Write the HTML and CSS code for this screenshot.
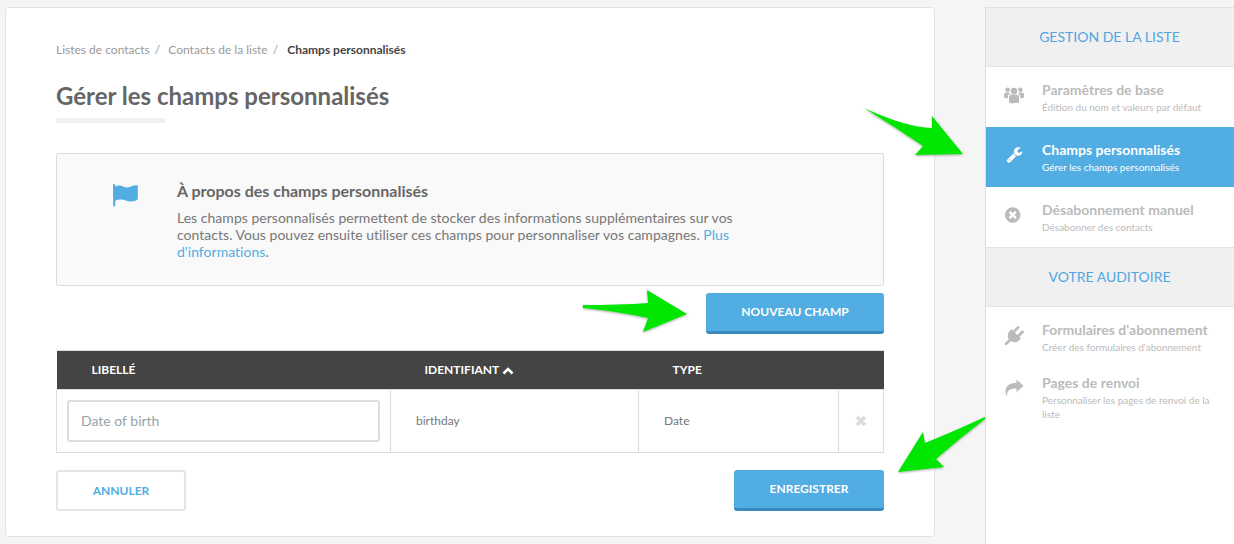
FILE: index.html
```html
<!DOCTYPE html>
<html lang="fr">
<head>
    <meta charset="UTF-8">
    <title>Champs personnalisés</title>
    <link rel="stylesheet" href="styles.css">
</head>
<body>

    <div class="page">
        <!-- Main card -->
        <div class="card">
            <div class="breadcrumb">
                <a href="#">Listes de contacts</a><span class="sep">/</span>
                <a href="#">Contacts de la liste</a><span class="sep">/</span>
                <strong>Champs personnalisés</strong>
            </div>

            <h1 class="page-title">Gérer les champs personnalisés</h1>

            <div class="info-box">
                <div class="info-icon">
                    <svg width="26" height="24" viewBox="0 0 26 24"><path fill="#52ade2" d="M1 2.500C1 .6 3.200 .6 3.200 2.500V3.400C6 2 8.600 2.200 11 3.400C13.500 4.600 16 5 18.500 3.800C20.500 2.800 23 1.600 25.800 2.400V16C25.800 17 22 18.600 18 18.600C15 18.600 12.500 16.500 9 16.500C6.800 16.500 4.800 17 3.200 17.800V22.600C3.200 24 1.200 24 1.200 22.600Z"/></svg>
                </div>
                <div class="info-text">
                    <h2>À propos des champs personnalisés</h2>
                    <p>Les champs personnalisés permettent de stocker des informations supplémentaires sur vos contacts. Vous pouvez ensuite utiliser ces champs pour personnaliser vos campagnes. <a href="#">Plus d'informations</a>.</p>
                </div>
            </div>

            <div class="new-row">
                <button class="btn btn-primary btn-new">NOUVEAU CHAMP</button>
            </div>

            <table class="fields-table">
                <thead>
                    <tr>
                        <th class="col-label">LIBELLÉ</th>
                        <th class="col-id">IDENTIFIANT <svg class="sort-icon" width="12" height="8" viewBox="0 0 12 8"><path d="M1.500 6.500L6 2L10.500 6.500" fill="none" stroke="#fff" stroke-width="2.600"/></svg></th>
                        <th class="col-type">TYPE</th>
                        <th class="col-del"></th>
                    </tr>
                </thead>
                <tbody>
                    <tr>
                        <td class="cell-input"><input class="field-input" type="text" placeholder="Date of birth"></td>
                        <td class="cell-id">birthday</td>
                        <td class="cell-type">Date</td>
                        <td class="cell-del">
                            <svg width="12" height="12" viewBox="0 0 12 12"><path d="M2 2L10 10M10 2L2 10" stroke="#ddd" stroke-width="3.600"/></svg>
                        </td>
                    </tr>
                </tbody>
            </table>

            <div class="actions">
                <button class="btn btn-cancel">ANNULER</button>
                <button class="btn btn-primary btn-save">ENREGISTRER</button>
            </div>
        </div>

        <!-- Sidebar -->
        <div class="sidebar">
            <div class="side-head">GESTION DE LA LISTE</div>
            <a class="side-item" href="#">
                <span class="side-icon">
                    <svg width="20" height="18" viewBox="0 0 20 18"><g fill="#bbb"><circle cx="10" cy="5" r="3.300"/><circle cx="3.600" cy="3.800" r="2.300"/><circle cx="16.400" cy="3.800" r="2.300"/><path d="M5 10.500C5 9 6.500 8.600 10 8.600C13.500 8.600 15 9 15 10.500V15.500C15 17 13.500 17.200 10 17.200C6.500 17.200 5 17 5 15.500Z"/><path d="M0 8C0 6.800 2 6.500 4.800 6.600C5 7.300 5.500 7.800 6 8C4.500 8.400 3.800 9.200 3.800 10.500V12.500C1.500 12.300 0 11.800 0 10.800Z"/><path d="M20 8C20 6.800 18 6.500 15.200 6.600C15 7.300 14.500 7.800 14 8C15.500 8.400 16.200 9.200 16.200 10.500V12.500C18.500 12.300 20 11.800 20 10.800Z"/></g></svg>
                </span>
                <span class="side-text"><b>Paramètres de base</b><small>Édition du nom et valeurs par défaut</small></span>
            </a>
            <a class="side-item active" href="#">
                <span class="side-icon">
                    <svg width="17" height="17" viewBox="0 0 1792 1792"><path fill="#fff" d="M448 1472q0-26-19-45t-45-19-45 19-19 45 19 45 45 19 45-19 19-45zm644-420l-682 682q-37 37-90 37-52 0-91-37l-106-108q-38-36-38-90 0-53 38-91l681-681q39 98 114.500 173.500t173.500 114.500zm634-435q0 39-23 106-47 134-164.500 217.500t-258.500 83.500q-185 0-316.500-131.500t-131.500-316.500 131.500-316.500 316.500-131.500q58 0 121.500 16.500t107.500 46.500q16 11 16 28t-16 28l-293 169v224l193 107q5-3 79-48.500t135.500-81 70.500-35.500q15 0 23.500 10t8.500 25z"/></svg>
                </span>
                <span class="side-text"><b>Champs personnalisés</b><small>Gérer les champs personnalisés</small></span>
            </a>
            <a class="side-item" href="#">
                <span class="side-icon">
                    <svg width="18" height="18" viewBox="0 0 1792 1792"><path fill="#bbb" d="M1149 1122q0-26-19-45l-181-181 181-181q19-19 19-45 0-27-19-46l-90-90q-19-19-46-19-26 0-45 19l-181 181-181-181q-19-19-45-19-27 0-46 19l-90 90q-19 19-19 46 0 26 19 45l181 181-181 181q-19 19-19 45 0 27 19 46l90 90q19 19 46 19 26 0 45-19l181-181 181 181q19 19 45 19 27 0 46-19l90-90q19-19 19-46zm387-226q0 209-103 385.500t-279.500 279.500-385.500 103-385.500-103-279.500-279.500-103-385.500 103-385.500 279.500-279.500 385.500-103 385.500 103 279.500 279.500 103 385.500z"/></svg>
                </span>
                <span class="side-text"><b>Désabonnement manuel</b><small>Désabonner des contacts</small></span>
            </a>

            <div class="side-head">VOTRE AUDITOIRE</div>
            <a class="side-item" href="#">
                <span class="side-icon">
                    <svg width="19" height="19" viewBox="0 0 1792 1792"><path fill="#bbb" d="M1755 453q37 38 37 90.500t-37 90.500l-401 400 150 150-160 160q-163 163-389.500 186.500t-411.500-100.500l-362 362h-181v-181l362-362q-124-185-100.500-411.500t186.500-389.500l160-160 150 150 400-401q38-37 91-37t90 37 37 90.500-37 90.500l-400 401 234 234 401-400q38-37 91-37t90 37z"/></svg>
                </span>
                <span class="side-text"><b>Formulaires d'abonnement</b><small>Créer des formulaires d'abonnement</small></span>
            </a>
            <a class="side-item side-item-tall" href="#">
                <span class="side-icon">
                    <svg width="19" height="17" viewBox="0 0 19 17"><path fill="#bbb" d="M18.500 6.800L11.500 0.500V4C5 4 0.500 6.500 0.500 12.500C0.500 14 1 15.500 1.600 16.500C2 16.800 2.300 16.500 2.200 16C1.800 12 4.500 9.600 11.500 9.600V13.200Z"/></svg>
                </span>
                <span class="side-text"><b>Pages de renvoi</b><small>Personnaliser les pages de renvoi de la liste</small></span>
            </a>
        </div>
    </div>

    <!-- Annotation arrows drawn over the screenshot -->
    <svg class="arrows" width="1234" height="544" viewBox="0 0 1234 544">
        <defs>
            <filter id="arrowShadow" x="-20%" y="-20%" width="140%" height="140%">
                <feDropShadow dx="0" dy="1" stdDeviation="1" flood-color="#000" flood-opacity="0.35"/>
            </filter>
        </defs>
        <g fill="#00e600" filter="url(#arrowShadow)">
            <path d="M864 108Q905 127 932 128L932 116L963 154L915 155L923 146Q895 127 864 108Z"/>
            <path d="M583 305Q620 305 648 303L647 290L687 314L643 332L648 318Q615 311 583 308Z"/>
            <path d="M985 417Q950 433 925 443L923 432L898 472L944 467L936 459Q960 438 985 419Z"/>
        </g>
    </svg>

</body>
</html>
```

FILE: styles.css
```css
/* Global Styles */
body {
    font-family: 'Lato', sans-serif;
    background-color: #f5f5f5;
    margin: 0;
    height: 544px;
    overflow: hidden;
    position: relative;
}

.page {
    display: flex;
    gap: 50px;
    padding: 7px 0 0 5px;
    height: 537px;
}

a {
    color: #52ade2;
    text-decoration: none;
}

/* Main card */
.card {
    width: 930px;
    height: 530px;
    box-sizing: border-box;
    flex-shrink: 0;
    background-color: #fff;
    border: 1px solid #e3e3e3;
    border-radius: 3px;
    padding: 34px 50px 0 50px;
}

.breadcrumb {
    font-size: 12px;
    line-height: 15px;
    color: #999;
}

.breadcrumb a {
    color: #999;
}

.breadcrumb .sep {
    margin: 0 5px 0 5px;
}

.breadcrumb strong {
    margin-left: 1px;
    font-weight: 700;
    color: #444;
}

.page-title {
    margin: 21px 0 0;
    padding-bottom: 7px;
    font-size: 24px;
    line-height: 36px;
    font-weight: 700;
    color: #666;
}

.page-title::after {
    content: "";
    display: block;
    width: 109px;
    height: 5px;
    margin-top: 4px;
    background-color: #f0f0f0;
}

/* Info box */
.info-box {
    display: flex;
    height: 133px;
    box-sizing: border-box;
    margin-top: 23px;
    background-color: #f9f9f9;
    border: 1px solid #ddd;
    border-radius: 2px;
}

.info-icon {
    width: 120px;
    padding: 29px 0 0 55px;
    box-sizing: border-box;
}

.info-text {
    width: 575px;
    padding-top: 27px;
}

.info-text h2 {
    margin: 0;
    font-size: 16px;
    line-height: 20px;
    font-weight: 700;
    color: #666;
}

.info-text p {
    margin: 8px 0 0;
    font-size: 14px;
    line-height: 17px;
    letter-spacing: 0.025px;
    color: #777;
}

/* Buttons */
.btn {
    font-family: 'Lato', sans-serif;
    font-size: 12px;
    font-weight: 700;
    border-radius: 3px;
    cursor: pointer;
}

.btn-primary {
    height: 41px;
    padding: 0 0 2px;
    color: #fff;
    background-color: #52ade2;
    border: none;
    border-bottom: 3px solid #3a8abf;
}

.btn-new {
    width: 178px;
}

.btn-save {
    width: 150px;
}

.btn-cancel {
    width: 130px;
    height: 41px;
    color: #52ade2;
    background-color: #fff;
    border: 2px solid #e5e5e5;
}

.new-row {
    display: flex;
    justify-content: flex-end;
    margin-top: 7px;
}

/* Table */
.fields-table {
    width: 827px;
    margin-top: 16px;
    border-collapse: collapse;
    table-layout: fixed;
}

.fields-table th {
    height: 39px;
    padding: 0 0 1px;
    box-sizing: border-box;
    font-size: 12px;
    font-weight: 700;
    text-align: left;
    color: #fff;
    background-color: #444;
    border-top: 1px solid #ddd;
}

.fields-table .col-label { width: 334px; padding-left: 35px; }
.fields-table .col-id { width: 248px; padding-left: 34px; }
.fields-table .col-type { width: 200px; padding-left: 34px; }
.fields-table .col-del { width: 45px; }

.sort-icon {
    vertical-align: -1px;
}

.fields-table td {
    height: 63px;
    padding: 0;
    box-sizing: border-box;
    font-size: 12px;
    color: #777;
    border: 1px solid #ddd;
}

.fields-table .cell-input {
    padding: 0 10px;
}

.fields-table .cell-id,
.fields-table .cell-type {
    padding: 0 0 2px 25px;
}

.fields-table .cell-del {
    text-align: center;
    padding-top: 3px;
}

.field-input {
    display: block;
    width: 100%;
    height: 42px;
    box-sizing: border-box;
    padding: 0 12px 1px;
    font-family: 'Lato', sans-serif;
    font-size: 14px;
    border: 2px solid #ddd;
    border-radius: 3px;
}

.field-input::placeholder {
    color: #95a5a6;
    opacity: 1;
}

.actions {
    display: flex;
    justify-content: space-between;
    margin-top: 17px;
}

/* Sidebar */
.sidebar {
    flex: 1;
    height: 537px;
    background-color: #fff;
    border-left: 1px solid #ddd;
}

.side-head {
    height: 60px;
    box-sizing: border-box;
    display: flex;
    align-items: center;
    justify-content: center;
    padding: 0 1px 2px 0;
    font-size: 14px;
    color: #52a5e2;
    background-color: #f0f0f0;
    border-top: 1px solid #e3e3e3;
    border-bottom: 1px solid #e3e3e3;
}

.side-item {
    display: flex;
    height: 60px;
    box-sizing: border-box;
    padding: 14px 16px 0 17px;
    color: #bbb;
}

.side-item-tall {
    height: auto;
    padding-top: 7px;
}

.side-item.active {
    color: #fff;
    background-color: #52ade2;
}

.side-icon {
    width: 22px;
    margin-right: 17px;
    flex-shrink: 0;
    padding-top: 5px;
    text-align: center;
}

.side-text b {
    display: block;
    font-size: 14px;
    line-height: 18px;
    font-weight: 700;
}

.side-text small {
    display: block;
    font-size: 10px;
    line-height: 14px;
    margin-top: 1px;
}

/* Annotation overlay */
.arrows {
    position: absolute;
    top: 0;
    left: 0;
    pointer-events: none;
}
```
